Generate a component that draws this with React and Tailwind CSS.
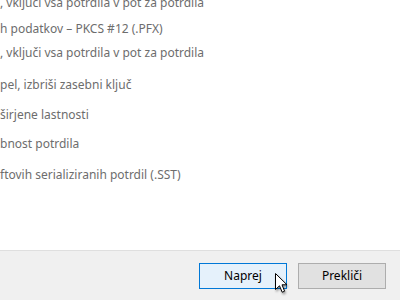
import React from 'react';

const lines = [
  { text: ', vključi vsa potrdila v pot za potrdila', cls: '-mt-[5px]' },
  { text: 'h podatkov – PKCS #12 (.PFX)', cls: 'mt-[10px]' },
  { text: ', vključi vsa potrdila v pot za potrdila', cls: 'mt-[8px]' },
  { text: 'pel, izbriši zasebni ključ', cls: 'mt-[16px]' },
  { text: 'širjene lastnosti', cls: 'mt-[14px]' },
  { text: 'bnost potrdila', cls: 'mt-[13px]' },
  { text: 'ftovih serializiranih potrdil (.SST)', cls: 'mt-[15px]' },
];

const Cursor = () => (
  <svg width="14" height="22" viewBox="0 0 14 22" className="drop-shadow-[1px_2px_1px_rgba(0,0,0,0.35)]">
    <path
      d="M0.5 0.5 L0.5 16.5 L4.5 12.8 L7.2 19.2 L9.6 18.2 L7 11.8 L12 11.8 Z"
      fill="#ffffff"
      stroke="#000000"
      strokeWidth="1"
      strokeLinejoin="miter"
    />
  </svg>
);

export default function App() {
  return (
    <div className="w-[400px] h-[300px] flex flex-col bg-white overflow-hidden font-['Segoe_UI','Noto_Sans',sans-serif] text-[12px]">
      <div className="flex-1 flex flex-col overflow-hidden text-[#6d6d6d] leading-[16px]">
        {lines.map((l, i) => (
          <div key={i} className={`${l.cls} h-[16px] whitespace-nowrap`}>{l.text}</div>
        ))}
      </div>
      <div className="h-[50px] bg-[#f0f0f0] border-t border-[#dfdfdf] flex items-start justify-end gap-[11px] pt-[12px] pr-[14px]">
        <div className="relative">
          <button className="w-[88px] h-[26px] bg-[#e5f1fb] border border-[#0078d7] text-black text-[12px]">
            Naprej
          </button>
          <div className="absolute left-[76px] top-[10px]">
            <Cursor />
          </div>
        </div>
        <button className="w-[88px] h-[26px] bg-[#e1e1e1] border border-[#adadad] text-black text-[12px]">
          Prekliči
        </button>
      </div>
    </div>
  );
}
